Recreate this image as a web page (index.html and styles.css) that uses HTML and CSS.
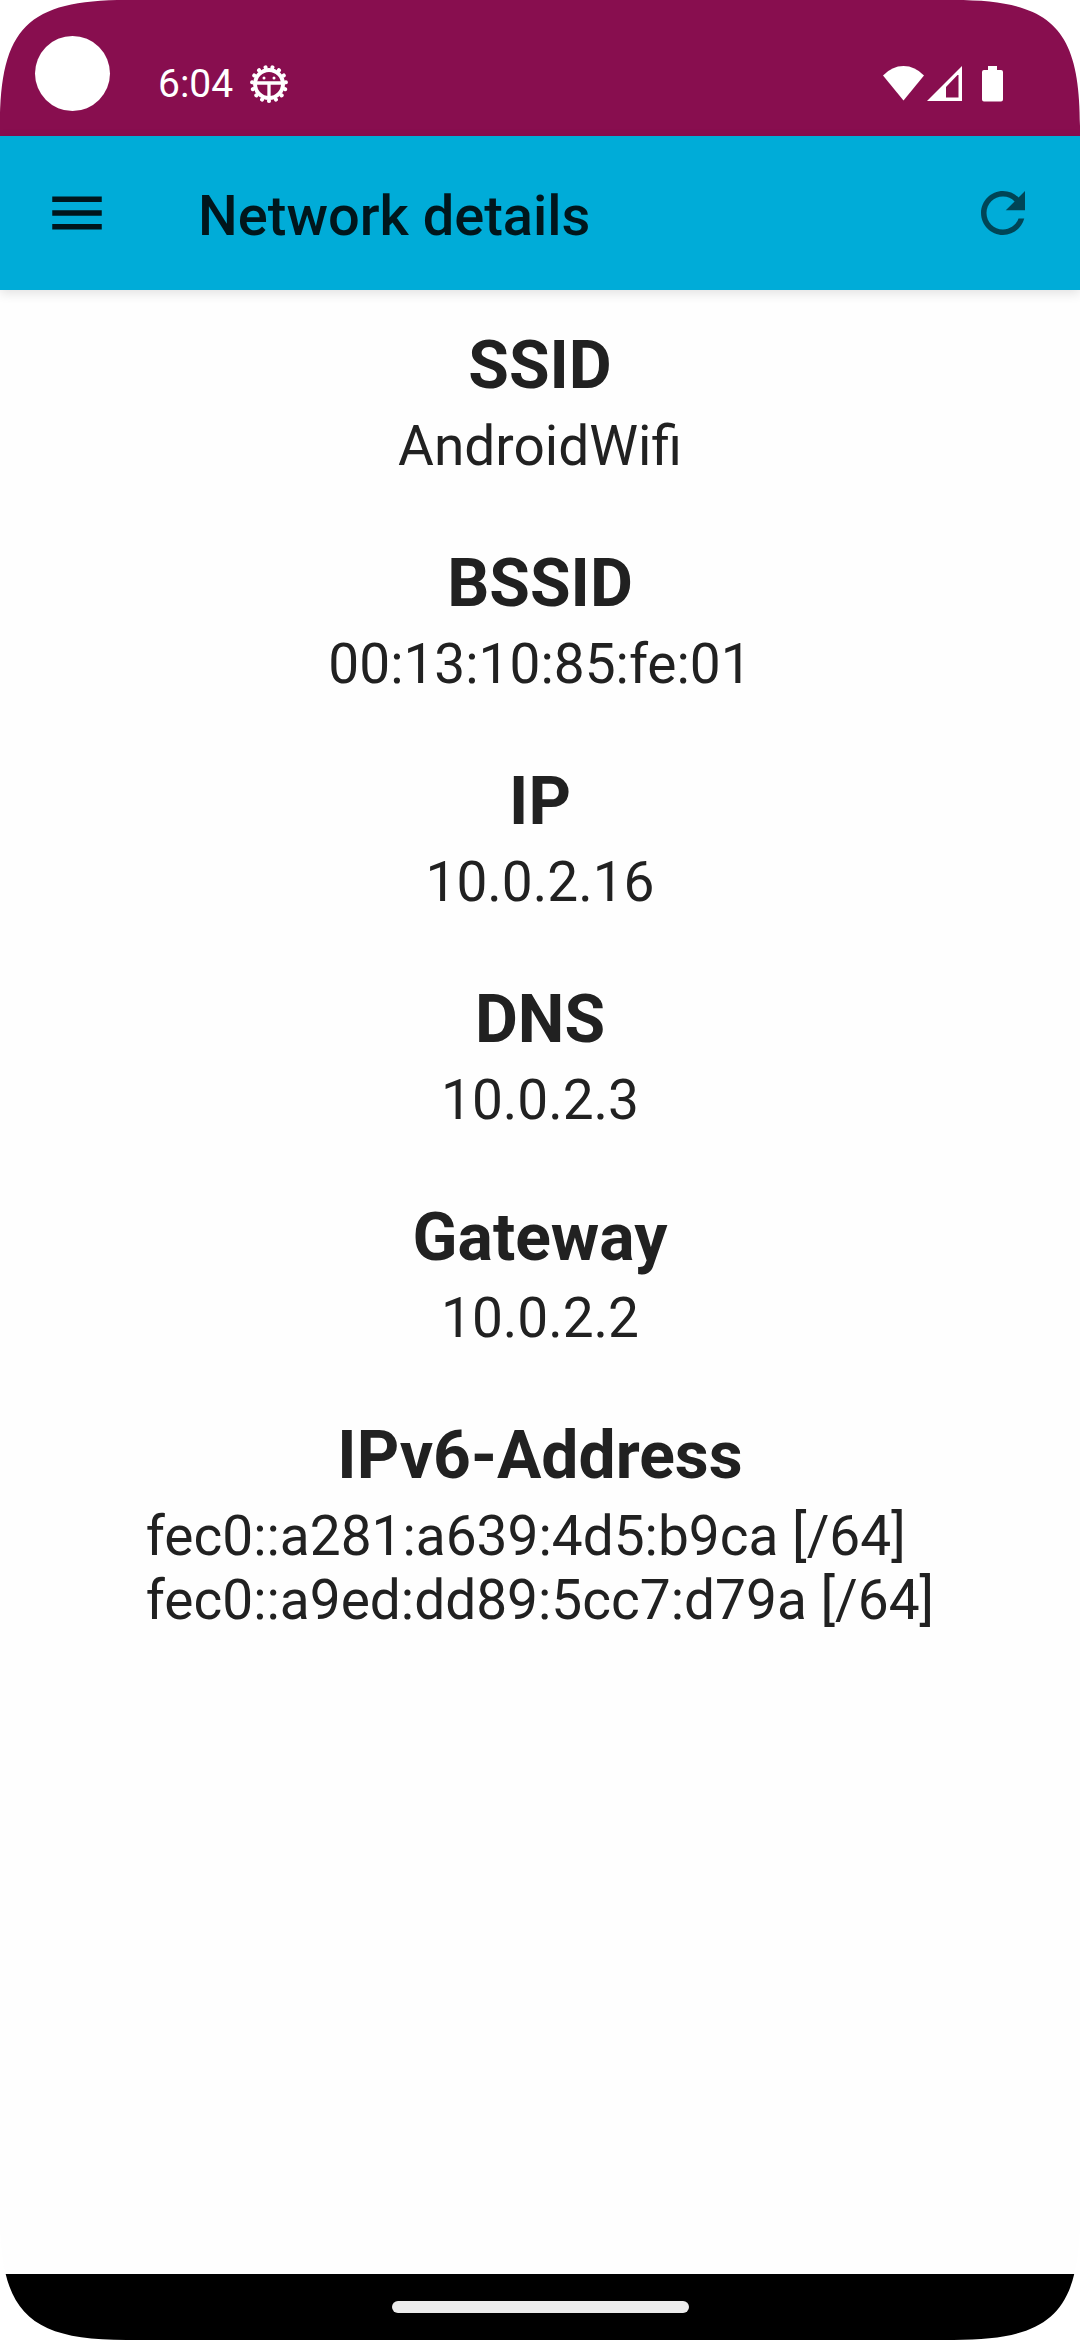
FILE: index.html
```html
<!DOCTYPE html>
<html lang="en">
<head>
  <meta charset="utf-8">
  <meta name="viewport" content="width=device-width, initial-scale=1">
  <title>Network details</title>
  <link rel="stylesheet" href="styles.css">
</head>
<body>
  <div class="screen">
    <div class="status-bar">
      <span class="camera"></span>
      <div class="status-group">
        <time class="clock">6:04</time>
        <svg class="debug-icon" viewBox="-20 -20 40 40" aria-hidden="true">
          <circle r="14" fill="none" stroke="currentColor" stroke-width="4"/>
          <circle r="17" fill="none" stroke="currentColor" stroke-width="4" stroke-linecap="round" pathLength="150" stroke-dasharray="0.2 9.8" stroke-dashoffset="-7.4"/>
          <path d="M-13-1H13M0 0V13" fill="none" stroke="currentColor" stroke-width="3.300"/>
          <circle cx="-5" cy="-6" r="1.500" fill="currentColor"/>
          <circle cx="5" cy="-6" r="1.500" fill="currentColor"/>
        </svg>
      </div>
      <div class="status-group signals">
        <svg class="wifi-icon" viewBox="0 0 41 36" aria-hidden="true">
          <path d="M20.500 34.500L0 9.500Q9 0 20.500 0T41 9.500Z" fill="currentColor"/>
        </svg>
        <svg class="cell-icon" viewBox="0 0 35 36" aria-hidden="true">
          <path fill-rule="evenodd" d="M0 35L35 0V35ZM19 21V31.500H31.500V9H30.500Z" fill="currentColor"/>
        </svg>
        <svg class="battery-icon" viewBox="0 0 21 36" aria-hidden="true">
          <path d="M6 0H15V4H19Q21 4 21 6V33.500Q21 35.500 19 35.500H2Q0 35.500 0 33.500V6Q0 4 2 4H6Z" fill="currentColor"/>
        </svg>
      </div>
    </div>

    <header class="toolbar">
      <button class="icon-button menu-button" type="button" aria-label="Open menu">
        <svg viewBox="0 0 24 24" aria-hidden="true"><path d="M3 18h18v-2H3v2zm0-5h18v-2H3v2zm0-7v2h18V6H3z" fill="currentColor"/></svg>
      </button>
      <h1 class="title">Network details</h1>
      <button class="icon-button refresh-button" type="button" aria-label="Refresh">
        <svg viewBox="0 0 24 24" aria-hidden="true"><path d="M17.650 6.350C16.200 4.900 14.210 4 12 4c-4.420 0-7.990 3.580-7.990 8s3.570 8 7.990 8c3.730 0 6.840-2.550 7.730-6h-2.080c-.82 2.330-3.040 4-5.650 4-3.310 0-6-2.690-6-6s2.690-6 6-6c1.660 0 3.140.69 4.220 1.780L13 11h7V4l-2.350 2.350z" fill="currentColor"/></svg>
      </button>
    </header>

    <main class="details">
      <section class="detail"><h2>SSID</h2><p>AndroidWifi</p></section>
      <section class="detail"><h2>BSSID</h2><p>00:13:10:85:fe:01</p></section>
      <section class="detail"><h2>IP</h2><p>10.0.2.16</p></section>
      <section class="detail"><h2>DNS</h2><p>10.0.2.3</p></section>
      <section class="detail"><h2>Gateway</h2><p>10.0.2.2</p></section>
      <section class="detail"><h2>IPv6-Address</h2><p>fec0::a281:a639:4d5:b9ca [/64]<br>fec0::a9ed:dd89:5cc7:d79a [/64]</p></section>
    </main>

    <div class="nav-bar"><span class="handle"></span></div>

    <svg class="corner top left" viewBox="0 0 126 126" aria-hidden="true"><path d="M0 0H126C28 0 0 28 0 126Z"/></svg>
    <svg class="corner top right" viewBox="0 0 126 126" aria-hidden="true"><path d="M126 0V126C126 28 98 0 0 0Z"/></svg>
    <svg class="corner bottom left" viewBox="0 0 126 126" aria-hidden="true"><path d="M0 126V0C0 98 28 126 126 126Z"/></svg>
    <svg class="corner bottom right" viewBox="0 0 126 126" aria-hidden="true"><path d="M126 126H0C98 126 126 98 126 0Z"/></svg>
  </div>
</body>
</html>
```

FILE: styles.css
```css
* {
  box-sizing: border-box;
}

body,
h1,
h2,
p {
  margin: 0;
}

body {
  background: #fefefe;
  color: #212121;
  font-family: Roboto, "Noto Sans", sans-serif;
}

svg {
  display: block;
}

.screen {
  position: relative;
  display: flex;
  flex-direction: column;
  min-height: 100vh;
}

.status-bar {
  display: flex;
  align-items: center;
  justify-content: space-between;
  height: 136px;
  padding: 31px 77px 0 158px;
  background: #880e4f;
  color: #fff;
}

.camera {
  position: absolute;
  top: 36px;
  left: 35px;
  width: 75px;
  height: 75px;
  border-radius: 50%;
  background: #fff;
}

.status-group {
  display: flex;
  align-items: center;
  gap: 16px;
}

.clock {
  font-size: 39px;
  line-height: 46px;
}

.debug-icon {
  width: 40px;
  height: 40px;
}

.signals {
  gap: 3px;
}

.signals svg {
  height: 36px;
}

.wifi-icon {
  width: 41px;
}

.cell-icon {
  width: 35px;
}

.battery-icon {
  width: 21px;
  margin-left: 17px;
}

.toolbar {
  display: flex;
  align-items: center;
  height: 154px;
  padding: 0 44px;
  background: #00acd8;
  box-shadow: 0 3px 11px rgba(0, 0, 0, 0.12);
}

.icon-button {
  width: 66px;
  height: 66px;
  padding: 0;
  border: 0;
  background: none;
  cursor: pointer;
}

.menu-button {
  color: rgba(0, 0, 0, 0.87);
}

.refresh-button {
  color: rgba(0, 0, 0, 0.6);
}

.title {
  flex: 1;
  padding: 6px 0 0 88px;
  color: rgba(0, 0, 0, 0.87);
  font-size: 56px;
  font-weight: 500;
  line-height: 64px;
}

.details {
  display: flex;
  flex: 1;
  flex-direction: column;
  gap: 67px;
  padding: 37px 44px;
}

.detail {
  display: flex;
  flex-direction: column;
  align-items: center;
  gap: 9px;
}

.detail h2 {
  font-size: 66px;
  font-weight: 700;
  line-height: 78px;
}

.detail p {
  font-size: 55px;
  line-height: 64px;
}

.nav-bar {
  display: flex;
  align-items: center;
  justify-content: center;
  height: 66px;
  background: #000;
}

.handle {
  width: 297px;
  height: 12px;
  border-radius: 6px;
  background: #ececec;
}

/* Rounded display corners, laid over the bars */
.corner {
  position: absolute;
  width: 126px;
  height: 126px;
  fill: #fff;
  pointer-events: none;
}

.top {
  top: 0;
}

.bottom {
  bottom: 0;
}

.left {
  left: 0;
}

.right {
  right: 0;
}
```
